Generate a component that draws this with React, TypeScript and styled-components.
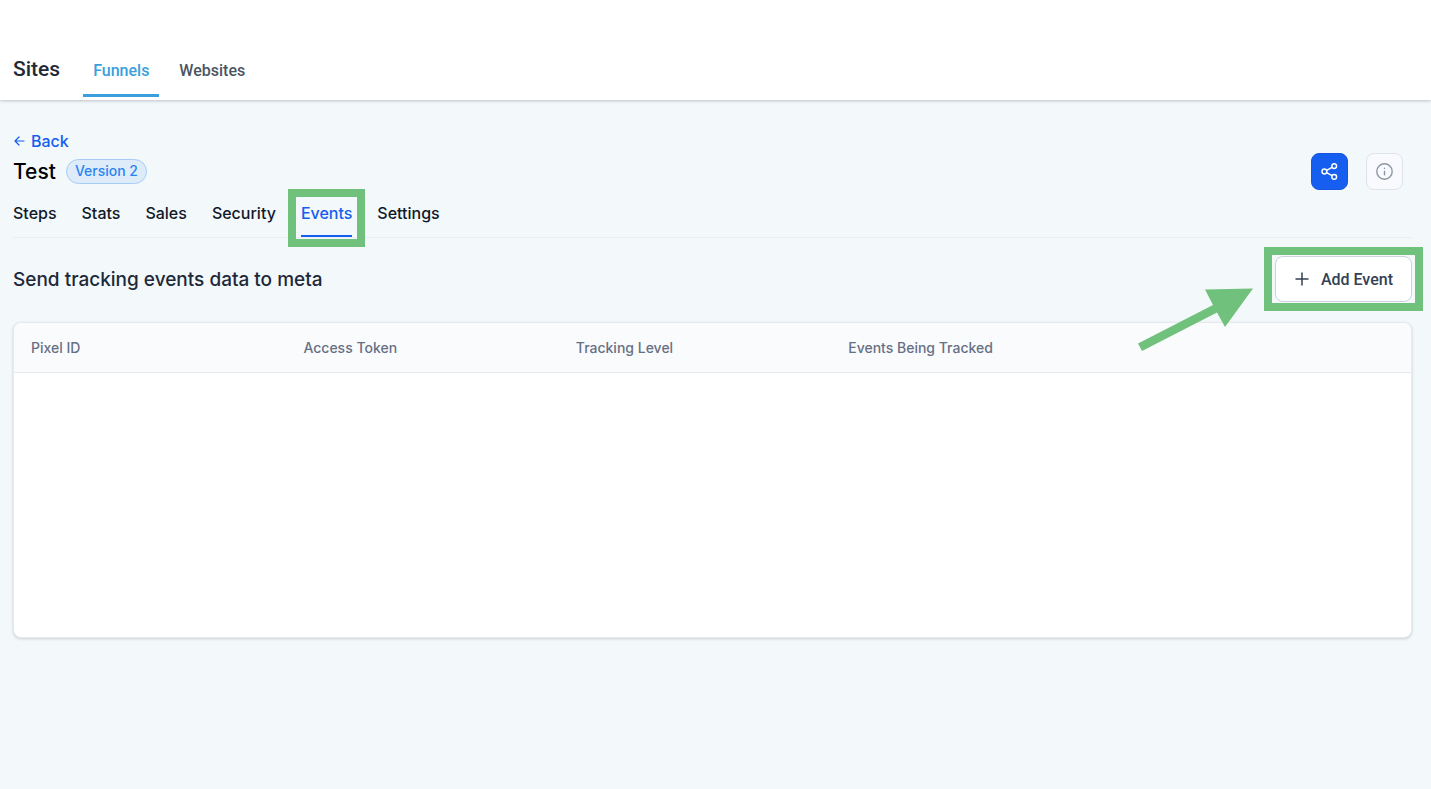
import React from "react";
import styled, { createGlobalStyle, css } from "styled-components";

const GlobalStyle = createGlobalStyle`
  *, *::before, *::after { box-sizing: border-box; }
  body {
    margin: 0;
    background: #f3f8fb;
    font-family: Inter, "Liberation Sans", sans-serif;
    font-weight: 500;
  }
  h1, h2 { margin: 0; font-weight: 500; }
  a { text-decoration: none; }
  button { font: inherit; cursor: pointer; }
`;

const Page = styled.div`
  min-height: 100vh;
`;

const TopBar = styled.header`
  display: flex;
  align-items: flex-end;
  height: 100px;
  padding: 0 13px 3px;
  background: #fff;
  box-shadow: 0 1px 3px rgba(15, 23, 42, 0.24);
  font-family: Roboto, "Liberation Sans", sans-serif;
`;

const SiteTitle = styled.h1`
  padding-bottom: 16px;
  margin-right: 23px;
  font-size: 21px;
  line-height: 24px;
  color: #1f2937;
`;

const TopLink = styled.a<{ $active?: boolean }>`
  padding: 0 10px 14px;
  border-bottom: 3px solid ${(p) => (p.$active ? "#3a9fdc" : "transparent")};
  font-size: 16px;
  line-height: 18px;
  color: ${(p) => (p.$active ? "#3a9fdc" : "#4b5563")};
`;

const TopNav = styled.nav`
  display: flex;
  gap: 10px;
`;

const Main = styled.main`
  padding: 31px 19px 32px 13px;
`;

const BackLink = styled.a`
  display: inline-flex;
  align-items: center;
  gap: 5px;
  font-size: 16px;
  line-height: 20px;
  color: #155eef;
  svg { display: block; }
`;

const TitleRow = styled.div`
  display: flex;
  align-items: center;
  justify-content: space-between;
  margin-top: 2px;
  padding-right: 9px;
`;

const TitleGroup = styled.div`
  display: flex;
  align-items: center;
  gap: 10px;
`;

const FunnelName = styled.h2`
  font-size: 21px;
  line-height: 24px;
  color: #000;
`;

const VersionTag = styled.span`
  padding: 0 8px 1px;
  border: 1px solid #a6ccf8;
  border-radius: 13px;
  background: #deebf8;
  font-size: 14px;
  line-height: 22px;
  color: #2a85f3;
`;

const Actions = styled.div`
  display: flex;
  gap: 18px;
`;

const IconButton = styled.button<{ $primary?: boolean }>`
  display: grid;
  place-items: center;
  width: 37px;
  height: 37px;
  padding: 0;
  border: 1px solid ${(p) => (p.$primary ? "#1a55e0" : "#e0e4ea")};
  border-radius: 8px;
  background: ${(p) => (p.$primary ? "#155eef" : "#f8fafd")};
  color: ${(p) => (p.$primary ? "#fff" : "#8d96a3")};
`;

const Tabs = styled.nav`
  display: flex;
  gap: 25px;
  margin-top: 12px;
  border-bottom: 1px solid #eaeef2;
`;

const Tab = styled.a<{ $active?: boolean }>`
  position: relative;
  padding-bottom: 13px;
  font-size: 16px;
  line-height: 22px;
  color: #101828;
  ${(p) =>
    p.$active &&
    css`
      color: #155eef;
      box-shadow: inset 0 -2px 0 #155eef;
    `}
`;

const Highlight = styled.span<{ $tight?: boolean }>`
  position: absolute;
  inset: ${(p) => (p.$tight ? "-9px -11px" : "-13px -13px -10px")};
  border: 8px solid #70c17c;
  pointer-events: none;
`;

const SectionRow = styled.section`
  display: flex;
  align-items: center;
  justify-content: space-between;
  margin-top: 18px;
`;

const SectionTitle = styled.h2`
  padding-top: 2px;
  font-size: 19px;
  line-height: 24px;
  color: #1d2939;
`;

const AddWrap = styled.div`
  position: relative;
`;

const AddButton = styled.button`
  display: flex;
  align-items: center;
  gap: 12px;
  height: 46px;
  padding: 0 18px 0 19px;
  border: 1px solid #cdd3dd;
  border-radius: 8px;
  background: #fff;
  font-family: Roboto, "Liberation Sans", sans-serif;
  font-size: 16px;
  color: #344054;
`;

const Arrow = styled.svg`
  position: absolute;
  right: 158px;
  top: 30px;
  pointer-events: none;
`;

const Card = styled.div`
  min-height: 316px;
  margin-top: 20px;
  border: 1px solid #e6eaee;
  border-radius: 8px;
  background: #fff;
  box-shadow: 0 1px 3px rgba(16, 24, 40, 0.18);
  overflow: hidden;
`;

const EventTable = styled.table`
  width: 100%;
  border-spacing: 0;
  table-layout: fixed;
`;

const HeadCell = styled.th<{ $rest?: boolean }>`
  width: ${(p) => (p.$rest ? "auto" : "19.5%")};
  height: 50px;
  padding: 0 17px;
  border-bottom: 1px solid #e7eaef;
  background: #fafbfd;
  font-size: 14px;
  line-height: 20px;
  font-weight: 500;
  text-align: left;
  color: #667085;
`;

const tabs = ["Steps", "Stats", "Sales", "Security", "Events", "Settings"];
const columns = ["Pixel ID", "Access Token", "Tracking Level", "Events Being Tracked"];

export default function App() {
  return (
    <Page>
      <GlobalStyle />
      <TopBar>
        <SiteTitle>Sites</SiteTitle>
        <TopNav aria-label="Sites">
          <TopLink href="#funnels" $active>Funnels</TopLink>
          <TopLink href="#websites">Websites</TopLink>
        </TopNav>
      </TopBar>
      <Main>
        <BackLink href="#back">
          <svg width="13" height="12" viewBox="0 0 13 12" fill="none" stroke="currentColor" strokeWidth="1.2" strokeLinecap="round" strokeLinejoin="round" aria-hidden="true">
            <path d="M11 6H2.5M6 2L2 6l4 4" />
          </svg>
          Back
        </BackLink>
        <TitleRow>
          <TitleGroup>
            <FunnelName>Test</FunnelName>
            <VersionTag>Version 2</VersionTag>
          </TitleGroup>
          <Actions>
            <IconButton $primary aria-label="Share">
              <svg width="17" height="17" viewBox="0 0 17 17" fill="none" stroke="currentColor" strokeWidth="1.5" aria-hidden="true">
                <circle cx="3.4" cy="8.500" r="2.4" />
                <circle cx="13.2" cy="3.1" r="2.4" />
                <circle cx="13.2" cy="13.9" r="2.4" />
                <path d="M5.600 7.300l5.500-3M5.600 9.700l5.500 3" />
              </svg>
            </IconButton>
            <IconButton aria-label="Information">
              <svg width="17" height="17" viewBox="0 0 17 17" fill="none" stroke="currentColor" strokeWidth="1.4" strokeLinecap="round" aria-hidden="true">
                <circle cx="8.500" cy="8.500" r="7.700" />
                <path d="M8.500 8.300v3.400M8.500 5.300v.1" />
              </svg>
            </IconButton>
          </Actions>
        </TitleRow>
        <Tabs aria-label="Funnel">
          {tabs.map((name) => (
            <Tab key={name} href={`#${name.toLowerCase()}`} $active={name === "Events"}>
              {name}
              {name === "Events" && <Highlight />}
            </Tab>
          ))}
        </Tabs>
        <SectionRow>
          <SectionTitle>Send tracking events data to meta</SectionTitle>
          <AddWrap>
            <AddButton>
              <svg width="14" height="14" viewBox="0 0 14 14" fill="none" stroke="currentColor" strokeWidth="1.5" strokeLinecap="round" aria-hidden="true">
                <path d="M7 1v12M1 7h12" />
              </svg>
              Add Event
            </AddButton>
            <Highlight $tight />
            <Arrow width="118" height="66" viewBox="0 0 118 66" fill="#70c17c" aria-hidden="true">
              <path d="M2 57.5L77 19 69 3.5 117 2.5 89 41 81 26.5 6 65z" />
            </Arrow>
          </AddWrap>
        </SectionRow>
        <Card>
          <EventTable>
            <thead>
              <tr>
                {columns.map((name) => (
                  <HeadCell key={name} scope="col">{name}</HeadCell>
                ))}
                <HeadCell as="td" $rest />
              </tr>
            </thead>
          </EventTable>
        </Card>
      </Main>
    </Page>
  );
}
